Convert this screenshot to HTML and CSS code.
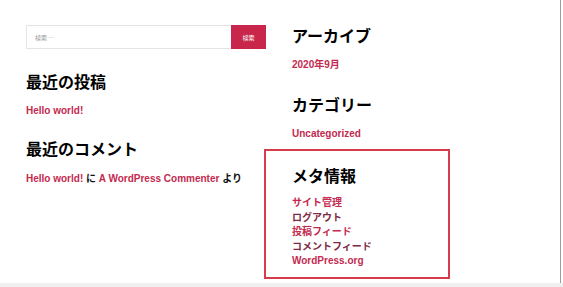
FILE: index.html
```html
<!DOCTYPE html>
<html lang="ja">
<head>
    <meta charset="UTF-8">
    <title>ウィジェット</title>
    <link rel="stylesheet" href="styles.css">
</head>
<body>

<div class="page">
    <div class="widgets">
        <!-- Left column -->
        <div class="col col-left">
            <form class="search">
                <input type="search" class="search-field" placeholder="検索 …">
                <button type="button" class="search-submit">検索</button>
            </form>

            <h2 class="widget-title first-left">最近の投稿</h2>
            <ul class="links">
                <li><a href="#">Hello world!</a></li>
            </ul>

            <h2 class="widget-title">最近のコメント</h2>
            <p class="comment"><a href="#">Hello world!</a> に <a href="#">A WordPress Commenter</a> より</p>
        </div>

        <!-- Right column -->
        <div class="col col-right">
            <h2 class="widget-title first-right">アーカイブ</h2>
            <ul class="links">
                <li><a href="#">2020年9月</a></li>
            </ul>

            <h2 class="widget-title">カテゴリー</h2>
            <ul class="links">
                <li><a href="#">Uncategorized</a></li>
            </ul>

            <div class="meta">
                <h2 class="widget-title">メタ情報</h2>
                <ul class="links meta-links">
                    <li><a href="#">サイト管理</a></li>
                    <li><a href="#" class="visited">ログアウト</a></li>
                    <li><a href="#">投稿フィード</a></li>
                    <li><a href="#" class="visited">コメントフィード</a></li>
                    <li><a href="#">WordPress.org</a></li>
                </ul>
            </div>
        </div>
    </div>
</div>
<div class="bottom-strip"></div>

</body>
</html>
```

FILE: styles.css
```css
body {
    margin: 0;
    background: #fff;
    font-family: "Liberation Sans", "Noto Sans CJK JP", sans-serif;
    color: #000;
}
.page {
    width: 560px;
    height: 283px;
    border-right: 1px solid #9c9c9c;
    overflow: hidden;
}
.bottom-strip {
    height: 4px;
    width: 563px;
    background: #efeff0;
}
.widgets {
    display: flex;
    padding-left: 26px;
    gap: 26px;
}
.col-left {
    width: 240px;
    padding-top: 25px;
}
.col-right {
    width: 200px;
}

/* search */
.search {
    display: flex;
    height: 24px;
    margin: 0;
}
.search-field {
    flex: 1;
    box-sizing: border-box;
    height: 24px;
    margin: 0;
    padding: 0 8px;
    border: 1px solid #e4e4e4;
    border-right: none;
    font-family: "Noto Sans CJK JP", sans-serif;
    font-size: 6px;
    color: #888;
    outline: none;
}
.search-field::placeholder {
    color: #999;
}
.search-submit {
    width: 35px;
    height: 24px;
    margin: 0;
    padding: 0;
    border: none;
    background: #c8264a;
    color: #fff;
    font-family: "Noto Sans CJK JP", sans-serif;
    font-size: 6px;
}

/* widgets */
.widget-title {
    margin: 0;
    font-family: "Noto Sans CJK JP", sans-serif;
    font-size: 16px;
    font-weight: 700;
    line-height: 20px;
}
.first-left {
    margin-top: 22px;
}
.first-right {
    margin-top: 25px;
}
.links {
    list-style: none;
    margin: 13px 0 0;
    padding: 0;
}
.col-left .links {
    margin-bottom: 20px;
}
.col-right .links {
    margin-bottom: 22px;
}
.links li,
.comment {
    font-size: 10px;
    font-weight: 700;
    line-height: 14px;
}
a {
    color: #c42a50;
    text-decoration: none;
}
a.visited {
    color: #7e2a44;
}
.comment {
    margin: 14px 0 0;
    color: #111;
}

/* highlighted meta widget */
.meta {
    width: 156px;
    margin-top: -14px;
    margin-left: -28px;
    padding: 14px 0 8px 26px;
    border: 2px solid #d63c4a;
}
.meta-links {
    margin: 11px 0 0 !important;
}
.meta-links li {
    line-height: 14.5px;
}
```
